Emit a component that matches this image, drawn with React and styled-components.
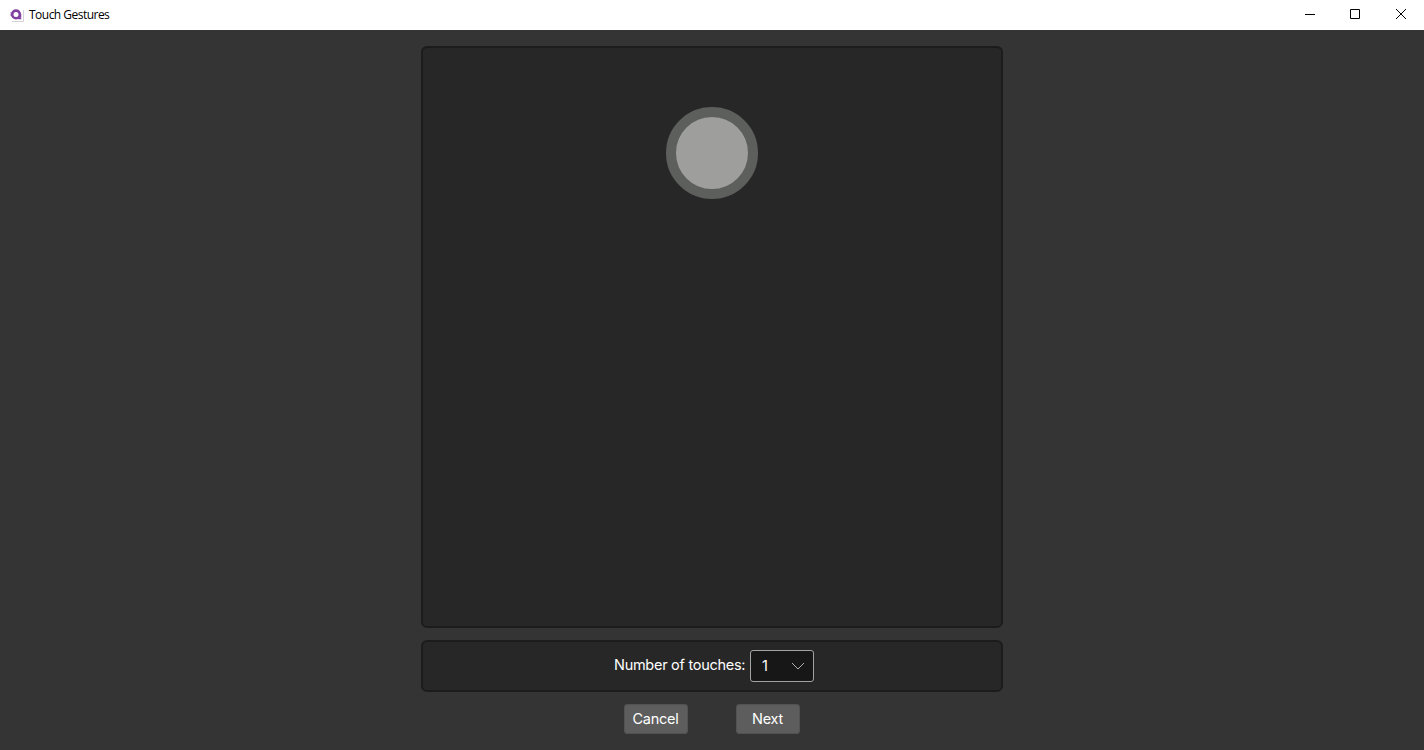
import React from "react";
import styled, { createGlobalStyle } from "styled-components";

const Global = createGlobalStyle`
  * { box-sizing: border-box; }
  body { margin: 0; background: #343434; font-family: Inter, "Liberation Sans", sans-serif; overflow: hidden; }
`;

const Window = styled.div`
  display: flex;
  flex-direction: column;
  height: 750px;
  background: #343434;
`;

const TitleBar = styled.header`
  display: flex;
  align-items: center;
  height: 30px;
  flex: none;
  padding-left: 9px;
  background: #ffffff;
`;

const Title = styled.span`
  flex: 1;
  margin-left: 4px;
  font: 12px/30px "Open Sans", "Noto Sans", sans-serif;
  letter-spacing: -0.52px;
  color: #000000;
`;

const WindowButton = styled.button`
  display: flex;
  align-items: center;
  justify-content: center;
  width: ${(p) => p.$width}px;
  height: 30px;
  padding: 0 0 2px;
  border: 0;
  background: transparent;
`;

const Content = styled.main`
  display: flex;
  flex-direction: column;
  align-items: center;
  flex: 1;
  padding-top: 16px;
`;

const Panel = styled.section`
  display: flex;
  justify-content: center;
  width: 582px;
  height: ${(p) => p.$height}px;
  padding-top: ${(p) => p.$top}px;
  margin-bottom: 12px;
  border: 2px solid #1c1c1c;
  border-radius: 6px;
  background: #272727;
`;

const TouchPoint = styled.div`
  width: 92px;
  height: 92px;
  border: 10px solid #5d5f5c;
  border-radius: 50%;
  background: #9e9e9c;
`;

const Label = styled.label`
  width: 136px;
  margin-left: 4px;
  font-size: 14.5px;
  line-height: 30px;
  letter-spacing: -0.28px;
  white-space: nowrap;
  color: #ffffff;
`;

const Select = styled.button`
  display: flex;
  align-items: center;
  justify-content: space-between;
  width: 64px;
  height: 32px;
  padding: 0 8px 0 11px;
  border: 1px solid #a3a3a3;
  border-radius: 3px;
  background: #171717;
  color: #ffffff;
  font: 14.5px/30px Inter, sans-serif;
`;

const Actions = styled.div`
  display: flex;
  gap: 48px;
`;

const ActionButton = styled.button`
  width: 64px;
  height: 30px;
  padding: 0 1px 0 0;
  border: 1px solid #525252;
  border-radius: 3px;
  background: #5d5d5d;
  color: #ffffff;
  font: 14.5px/28px Inter, sans-serif;
  letter-spacing: -0.28px;
`;

export default function App() {
  return (
    <Window>
      <Global />
      <TitleBar>
        <svg width="16" height="16" viewBox="0 0 16 16" fill="none">
          <path d="M3 14.5H14.5V3" stroke="#d5d2d8" />
          <path d="M1 6H3M1 8H3" stroke="#ad7cbd" />
          <circle cx="7" cy="7.4" r="3.8" stroke="#8141a0" strokeWidth="2.6" />
          <path d="M9 11.6H11.7V7" stroke="#8141a0" strokeWidth="1.1" />
        </svg>
        <Title>Touch Gestures</Title>
        <WindowButton $width={45} aria-label="Minimize">
          <svg width="10" height="10"><path d="M0 5.5H10" stroke="#000" /></svg>
        </WindowButton>
        <WindowButton $width={46} aria-label="Maximize">
          <svg width="10" height="10"><path d="M.5.5H9.5V9.5H.5Z" fill="none" stroke="#000" /></svg>
        </WindowButton>
        <WindowButton $width={46} aria-label="Close">
          <svg width="10" height="10"><path d="M0 0L10 10M10 0L0 10" stroke="#000" /></svg>
        </WindowButton>
      </TitleBar>
      <Content>
        <Panel $height={582} $top={59}>
          <TouchPoint />
        </Panel>
        <Panel $height={52} $top={8}>
          <Label>Number of touches:</Label>
          <Select>
            1
            <svg width="14" height="8" viewBox="0 0 14 8" fill="none">
              <path d="M1 1L7 7L13 1" stroke="#b0b0b0" />
            </svg>
          </Select>
        </Panel>
        <Actions>
          <ActionButton>Cancel</ActionButton>
          <ActionButton>Next</ActionButton>
        </Actions>
      </Content>
    </Window>
  );
}
